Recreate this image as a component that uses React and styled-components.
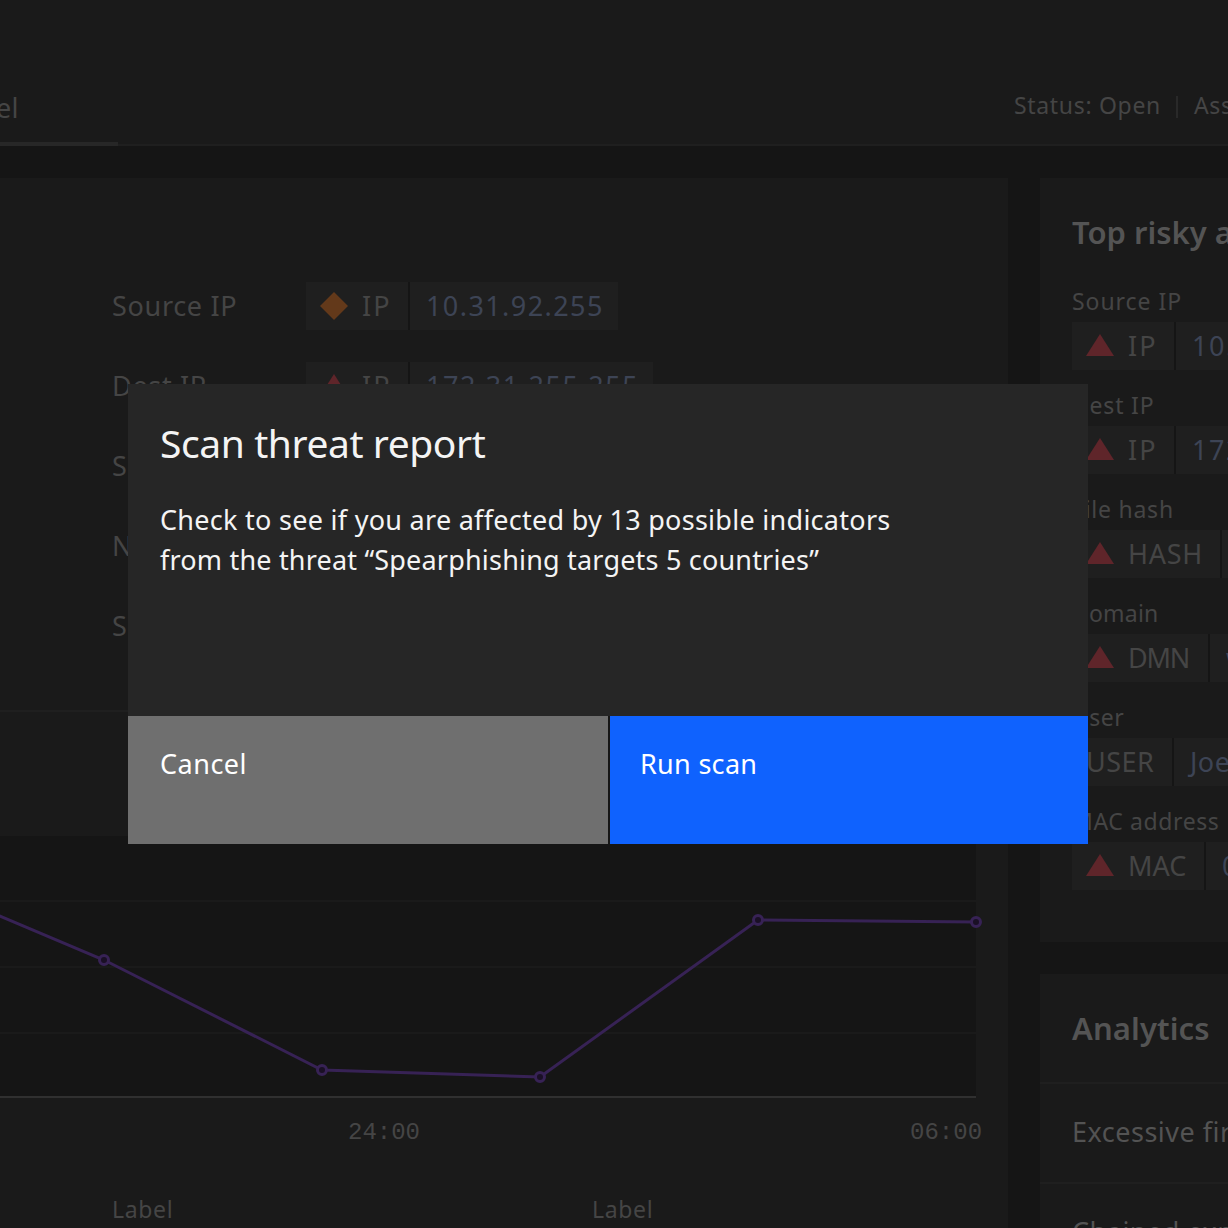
import React from 'react';
import styled, { createGlobalStyle } from 'styled-components';

const GlobalStyle = createGlobalStyle`
  * { box-sizing: border-box; }
  body { margin: 0; background: #151515; }
`;

const Page = styled.div`
  height: 1228px;
  width: 1228px;
  overflow: hidden;
  position: relative;
  display: flex;
  flex-direction: column;
  font-family: 'Noto Sans', 'Open Sans', sans-serif;
  font-size: 27px;
  color: #454545;
  background: #151515;
  white-space: nowrap;
`;

const Header = styled.header`
  flex: none;
  height: 146px;
  display: flex;
  justify-content: space-between;
  background: #1a1a1a;
  border-bottom: 2px solid #1f1f1f;
`;

const Tab = styled.div`
  width: 118px;
  height: 146px;
  padding-top: 87px;
  line-height: 42px;
  text-indent: -4px;
  letter-spacing: 0.2px;
  border-bottom: 4px solid #272727;
`;

const StatusBar = styled.div`
  width: 214px;
  padding-top: 85px;
  display: flex;
  font-size: 23px;
  line-height: 40px;
  letter-spacing: 0.68px;
`;

const StatusDivider = styled.span`
  flex: none;
  width: 2px;
  height: 22px;
  margin: 11px 16px 0 15px;
  background: #292929;
`;

const Columns = styled.div`
  flex: 1;
  min-height: 0;
  display: grid;
  grid-template-columns: 1008px 600px;
  column-gap: 32px;
  padding-top: 32px;
`;

const MainPanel = styled.main`
  background: #1a1a1a;
`;

const Details = styled.section`
  height: 534px;
  padding: 104px 0 0 112px;
  display: flex;
  flex-direction: column;
  gap: 32px;
  border-bottom: 2px solid #1f1f1f;
`;

const DetailRow = styled.div`
  height: 48px;
  display: grid;
  grid-template-columns: 194px 1fr;
  line-height: 48px;
`;

const Spaced = styled.span`
  letter-spacing: ${p => p.$ls}px;
`;

const TagBox = styled.div`
  display: flex;
  gap: 2px;
  height: 48px;
  line-height: 48px;
`;

const TagKind = styled.div`
  flex: none;
  width: ${p => p.$width}px;
  padding-left: 14px;
  display: flex;
  align-items: center;
  gap: 14px;
  background: #1f1f1f;
  box-shadow: 2px 0 0 #151515;
  letter-spacing: ${p => p.$ls}px;
`;

const TagValue = styled.div`
  padding: 0 14px 0 16px;
  background: #1f1f1f;
  color: #3d4455;
  letter-spacing: ${p => p.$ls}px;
`;

const ChartBlock = styled.section`
  padding-top: 124px;
`;

const ChartSvg = styled.svg`
  display: block;
  overflow: visible;
`;

const Axis = styled.div`
  padding: 15px 0 0 348px;
  display: flex;
  gap: 490px;
  font-family: 'Liberation Mono', monospace;
  font-size: 24px;
  line-height: 40px;
`;

const Legend = styled.div`
  display: grid;
  grid-template-columns: 480px 1fr;
  padding: 36px 0 0 112px;
  font-size: 23px;
  line-height: 40px;
  letter-spacing: 0.65px;
`;

const Side = styled.aside`
  display: flex;
  flex-direction: column;
  gap: 32px;
`;

const RiskCard = styled.section`
  flex: none;
  height: 764px;
  padding: 31px 0 0 32px;
  background: #1a1a1a;
`;

const CardTitle = styled.h2`
  margin: 0;
  font-size: 31px;
  line-height: 46px;
  font-weight: 600;
  color: #545454;
  letter-spacing: ${p => p.$ls}px;
`;

const RiskList = styled.div`
  padding-top: 26px;
  display: flex;
  flex-direction: column;
  gap: 16px;
`;

const RiskLabel = styled.div`
  height: 41px;
  line-height: 40px;
  font-size: 23px;
  letter-spacing: ${p => p.$ls}px;
`;

const RiskItem = styled.div`
  height: 88px;
`;

const AnalyticsCard = styled.section`
  flex: none;
  background: #1a1a1a;
`;

const AnalyticsHead = styled.div`
  height: 110px;
  padding: 31px 0 0 32px;
  border-bottom: 2px solid #1f1f1f;
`;

const AnalyticsRow = styled.div`
  height: 100px;
  padding-left: 32px;
  line-height: 96px;
  letter-spacing: 0.5px;
  color: #535353;
  border-bottom: 2px solid #1f1f1f;
`;

const Dialog = styled.div`
  position: absolute;
  left: 128px;
  top: 384px;
  width: 960px;
  height: 460px;
  display: flex;
  flex-direction: column;
  background: #262626;
  color: #f4f4f4;
`;

const DialogBody = styled.div`
  flex: 1;
  padding: 31px 32px 0;
`;

const DialogTitle = styled.h1`
  margin: 0;
  font-size: 39px;
  line-height: 56px;
  font-weight: 400;
  letter-spacing: -0.42px;
`;

const DialogText = styled.p`
  margin: 29px 0 0;
  line-height: 40px;
`;

const Actions = styled.div`
  height: 128px;
  display: grid;
  grid-template-columns: 480px 478px;
  gap: 2px;
  background: #161616;
`;

const Action = styled.button`
  border: 0;
  padding: ${p => (p.$primary ? '28px 0 0 30px' : '28px 0 0 32px')};
  display: flex;
  align-items: flex-start;
  font-family: inherit;
  font-size: 27px;
  line-height: 40px;
  letter-spacing: ${p => (p.$primary ? 0.3 : 0.5)}px;
  color: #fff;
  background: ${p => (p.$primary ? '#0f62fe' : '#6f6f6f')};
`;

const Diamond = () => (
  <svg width="28" height="28" viewBox="0 0 28 28">
    <path d="M14 0 28 14 14 28 0 14Z" fill="#63391a" />
  </svg>
);

const Triangle = () => (
  <svg width="28" height="28" viewBox="0 0 28 28">
    <path d="M14 2 28 24H0Z" fill="#5f252a" />
  </svg>
);

const icons = { diamond: Diamond, triangle: Triangle };

function Tag({ icon, kind, kindWidth, kindLs, value, valueLs = 1.2 }) {
  const Icon = icons[icon];
  return (
    <TagBox>
      <TagKind $width={kindWidth} $ls={kindLs}>
        {Icon && <Icon />}
        <span>{kind}</span>
      </TagKind>
      {value && <TagValue $ls={valueLs}>{value}</TagValue>}
    </TagBox>
  );
}

const details = [
  { label: 'Source IP', tag: { icon: 'diamond', kind: 'IP', kindWidth: 102, kindLs: 2, value: '10.31.92.255', valueLs: 1.42 } },
  { label: 'Dest IP', tag: { icon: 'triangle', kind: 'IP', kindWidth: 102, kindLs: 2, value: '172.31.255.255', valueLs: 1.55 } },
  { label: 'S' },
  { label: 'N' },
  { label: 'S' },
];

const risks = [
  { label: 'Source IP', ls: 0.95, tag: { icon: 'triangle', kind: 'IP', kindWidth: 102, kindLs: 2, value: '10.31.92.255', valueLs: 1.5 } },
  { label: 'Dest IP', ls: 0.8, tag: { icon: 'triangle', kind: 'IP', kindWidth: 102, kindLs: 2, value: '172.31.255.255', valueLs: 1.5 } },
  { label: 'File hash', ls: 0.75, tag: { icon: 'triangle', kind: 'HASH', kindWidth: 148, kindLs: 0.7, value: '5' } },
  { label: 'Domain', ls: 0.2, tag: { icon: 'triangle', kind: 'DMN', kindWidth: 136, kindLs: -1.2, value: 'www' } },
  { label: 'User', ls: 0.5, tag: { kind: 'USER', kindWidth: 100, kindLs: 0.5, value: 'Joe', valueLs: 0.5 } },
  { label: 'MAC address', ls: 0.6, tag: { icon: 'triangle', kind: 'MAC', kindWidth: 132, kindLs: 0, value: '0' } },
];

const points = [[104, 124], [322, 234], [540, 241], [758, 84], [976, 86]];

function Chart() {
  return (
    <ChartSvg width="976" height="262" viewBox="0 0 976 262">
      <rect width="976" height="260" fill="#151515" />
      {[64, 130, 196].map(y => <rect key={y} y={y} width="976" height="2" fill="#1a1a1a" />)}
      <rect y="260" width="976" height="2" fill="#303030" />
      <polyline
        points={[[-10, 76], ...points].map(p => p.join(',')).join(' ')}
        fill="none"
        stroke="#372255"
        strokeWidth="3"
      />
      {points.map(([x, y]) => (
        <circle key={x} cx={x} cy={y} r="4.5" fill="#1a1025" stroke="#372255" strokeWidth="3" />
      ))}
    </ChartSvg>
  );
}

export default function App() {
  return (
    <Page>
      <GlobalStyle />
      <Header>
        <Tab>el</Tab>
        <StatusBar>
          <span>Status: Open</span>
          <StatusDivider />
          <span>Assigned</span>
        </StatusBar>
      </Header>
      <Columns>
        <MainPanel>
          <Details>
            {details.map((d, i) => (
              <DetailRow key={i}>
                <Spaced $ls={0.68}>{d.label}</Spaced>
                {d.tag && <Tag {...d.tag} />}
              </DetailRow>
            ))}
          </Details>
          <ChartBlock>
            <Chart />
            <Axis>
              <span>24:00</span>
              <span>06:00</span>
            </Axis>
            <Legend>
              <span>Label</span>
              <span>Label</span>
            </Legend>
          </ChartBlock>
        </MainPanel>
        <Side>
          <RiskCard>
            <CardTitle $ls={0}>Top risky assets</CardTitle>
            <RiskList>
              {risks.map(r => (
                <RiskItem key={r.label}>
                  <RiskLabel $ls={r.ls}>{r.label}</RiskLabel>
                  <Tag {...r.tag} />
                </RiskItem>
              ))}
            </RiskList>
          </RiskCard>
          <AnalyticsCard>
            <AnalyticsHead>
              <CardTitle $ls={0.1}>Analytics</CardTitle>
            </AnalyticsHead>
            <AnalyticsRow>Excessive firewall</AnalyticsRow>
            <AnalyticsRow>Chained exploit</AnalyticsRow>
          </AnalyticsCard>
        </Side>
      </Columns>
      <Dialog role="dialog">
        <DialogBody>
          <DialogTitle>Scan threat report</DialogTitle>
          <DialogText>
            <Spaced $ls={0.28}>Check to see if you are affected by 13 possible indicators</Spaced>
            <br />
            <Spaced $ls={0.19}>from the threat “Spearphishing targets 5 countries”</Spaced>
          </DialogText>
        </DialogBody>
        <Actions>
          <Action>Cancel</Action>
          <Action $primary>Run scan</Action>
        </Actions>
      </Dialog>
    </Page>
  );
}
